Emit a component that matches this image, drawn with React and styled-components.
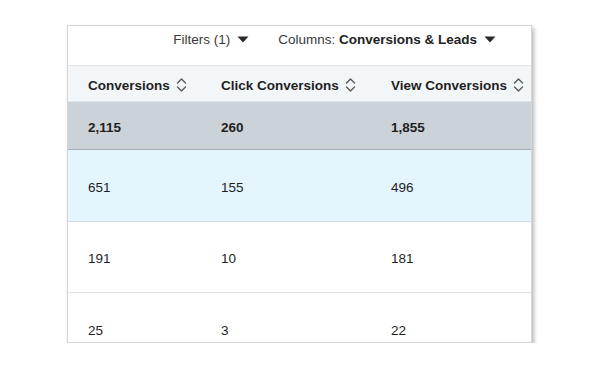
import React from "react";
import styled, { createGlobalStyle } from "styled-components";

const Global = createGlobalStyle`
  html, body { margin: 0; padding: 0; background: #ffffff; }
  body { font-family: "Liberation Sans", Arial, sans-serif; color: #1d1d1d; }
`;

const Page = styled.div`
  padding: 25px 0 0 67px;
`;

const Card = styled.div`
  width: 465px;
  height: 318px;
  box-sizing: border-box;
  border: 1px solid #d6d6d6;
  background: #fff;
  box-shadow: 2px 3px 4px rgba(0, 0, 0, 0.28);
  overflow: hidden;
  display: flex;
  flex-direction: column;
`;

const Toolbar = styled.div`
  height: 40px;
  flex: none;
  display: flex;
  align-items: center;
  justify-content: flex-end;
  gap: 29px;
  padding: 0 35px 12px 0;
  box-sizing: border-box;
  border-bottom: 1px solid #e3e6e8;
  font-size: 13.5px;
  color: #3a3a3a;
`;

const ToolButton = styled.div`
  display: flex;
  align-items: center;
  gap: 7px;
  white-space: nowrap;
  b { font-weight: bold; color: #222; }
  svg { flex: none; }
`;

const Row = styled.div`
  flex: none;
  display: grid;
  grid-template-columns: 133px 170px 1fr;
  align-items: center;
  height: ${(p) => p.$h}px;
  padding-top: 3px;
  box-sizing: border-box;
  background: ${(p) => p.$bg};
  border-bottom: 1px solid ${(p) => p.$line};
  font-size: 13.5px;
  font-weight: ${(p) => (p.$bold ? "bold" : "normal")};
  color: #1f1f1f;
`;

const Cell = styled.div`
  padding: 0 0 0 20px;
  display: flex;
  align-items: center;
  gap: 6px;
  white-space: nowrap;
  svg { flex: none; }
`;

const Caret = () => (
  <svg width="12" height="7" viewBox="0 0 12 7">
    <path d="M0.5 0.5 L11.5 0.5 L6 6.5 Z" fill="#2a2a2a" />
  </svg>
);

const Sort = () => (
  <svg width="11" height="16" viewBox="0 0 11 16">
    <path
      d="M1.5 6 L5.5 2 L9.5 6 M1.5 10 L5.5 14 L9.5 10"
      fill="none"
      stroke="#5a5a5a"
      strokeWidth="1.4"
      strokeLinecap="round"
      strokeLinejoin="round"
    />
  </svg>
);

const headers = ["Conversions", "Click Conversions", "View Conversions"];
const rows = [
  { v: ["2,115", "260", "1,855"], h: 48, bg: "#cbd2d8", line: "#a9b1b7", bold: true },
  { v: ["651", "155", "496"], h: 72, bg: "#e4f5fd", line: "#cfdde6" },
  { v: ["191", "10", "181"], h: 71, bg: "#ffffff", line: "#e3e3e3" },
  { v: ["25", "3", "22"], h: 72, bg: "#ffffff", line: "#e3e3e3" },
];

export default function App() {
  return (
    <>
      <Global />
      <Page>
        <Card>
          <Toolbar>
            <ToolButton>
              Filters (1) <Caret />
            </ToolButton>
            <ToolButton>
              <span>
                Columns: <b>Conversions &amp; Leads</b>
              </span>
              <Caret />
            </ToolButton>
          </Toolbar>
          <Row $h={36} $bg="#f3f6f8" $line="#e3e6e8" $bold>
            {headers.map((h) => (
              <Cell key={h}>
                {h} <Sort />
              </Cell>
            ))}
          </Row>
          {rows.map((r, i) => (
            <Row key={i} $h={r.h} $bg={r.bg} $line={r.line} $bold={r.bold}>
              {r.v.map((v, j) => (
                <Cell key={j}>{v}</Cell>
              ))}
            </Row>
          ))}
        </Card>
      </Page>
    </>
  );
}
